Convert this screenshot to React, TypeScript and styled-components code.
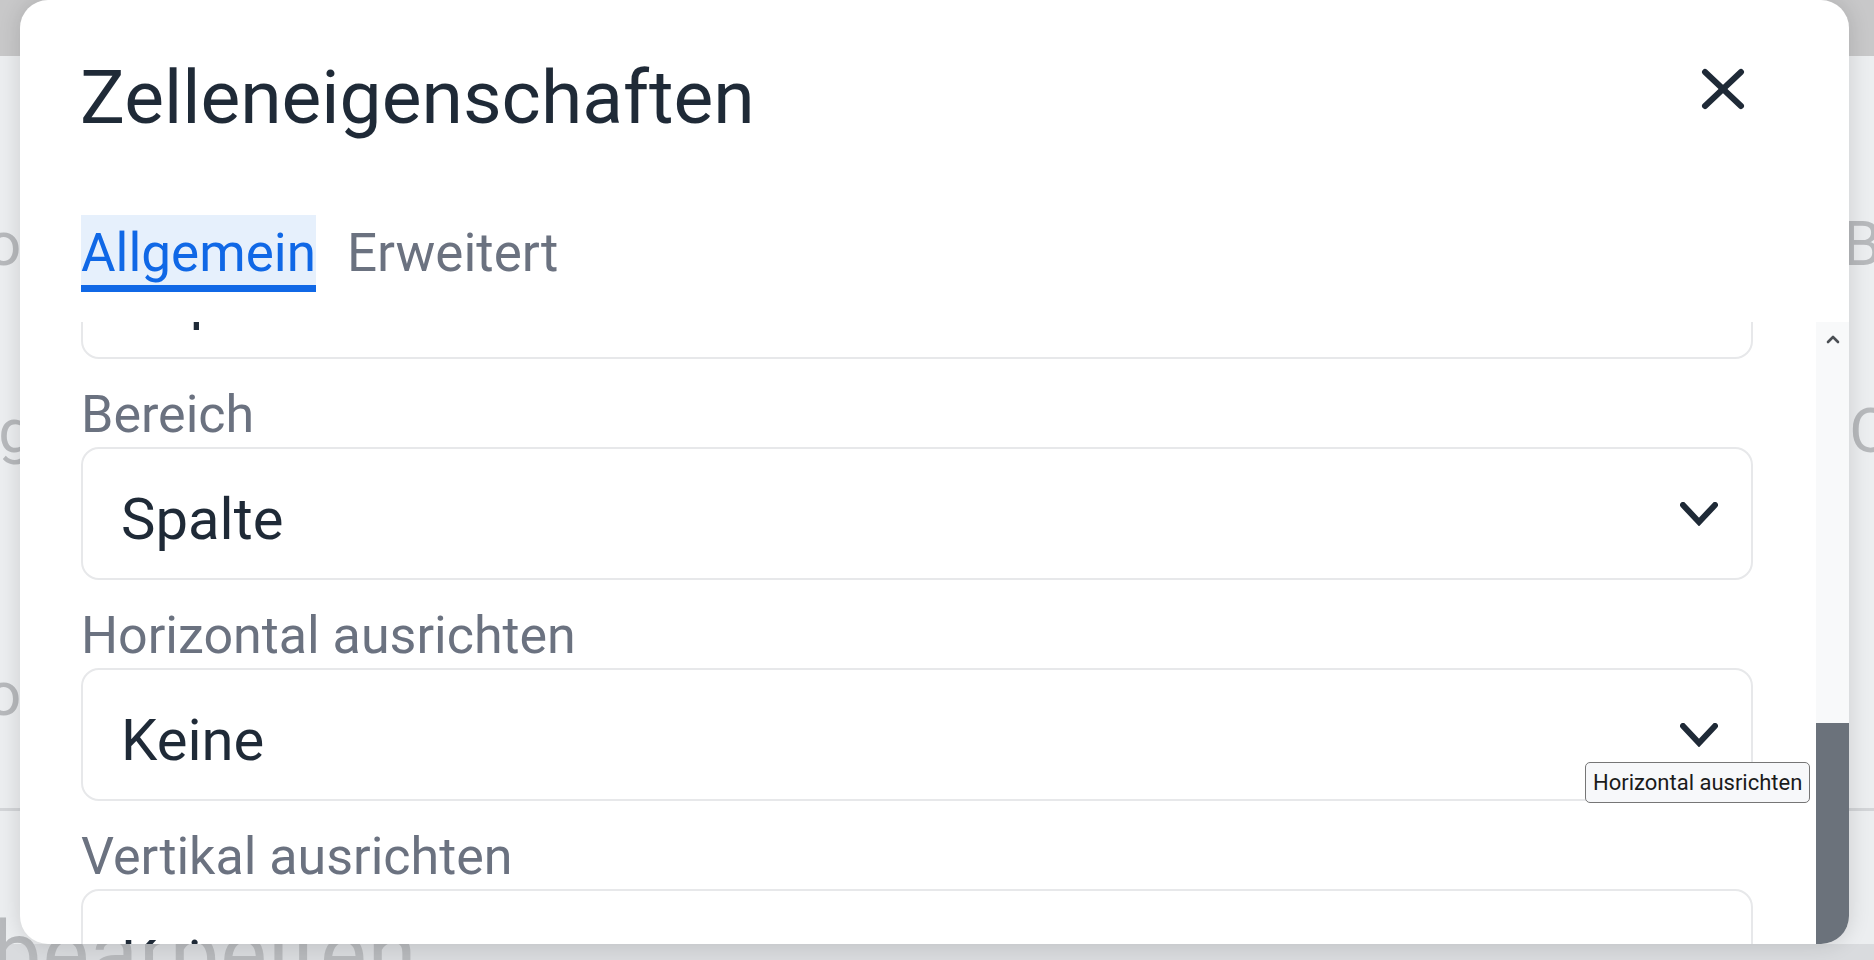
import React from "react";
import styled, { createGlobalStyle } from "styled-components";

const COLORS = {
    PAGE: "#eceef0",
    BAND: "#c8c8c9",
    GHOST: "#b7b9bc",
    TEXT: "#1f2a37",
    MUTED: "#6b7280",
    BLUE: "#1068e6",
    BLUE_BG: "#e6f0fc",
    BORDER: "#e7e8ea",
    TRACK: "#f8f9fa",
    THUMB: "#6b727b",
};

const GlobalStyle = createGlobalStyle`
    html, body {
        margin: 0;
        padding: 0;
    }
    body {
        font-family: Roboto, "Liberation Sans", sans-serif;
        background: ${COLORS.PAGE};
        overflow: hidden;
    }
    * {
        box-sizing: border-box;
    }
`;

const fields = [
    { label: "Zellentyp", value: "Kopfzelle" },
    { label: "Bereich", value: "Spalte" },
    { label: "Horizontal ausrichten", value: "Keine" },
    { label: "Vertikal ausrichten", value: "Keine" },
];

const Chevron = () => (
    <svg width="38" height="24" viewBox="0 0 38 24" fill="none">
        <polyline points="3,3 19,20 35,3" stroke={COLORS.TEXT} strokeWidth="6" strokeLinecap="round" strokeLinejoin="miter" />
    </svg>
);

const App: React.FC = () => {
    return (
        <>
            <GlobalStyle />
            <Page>
                <TopBand />
                <PageBody>
                    {/* faint page content peeking out beside the dialog */}
                    <GhostRow gap={158}>
                        <GhostText shiftLeft={-14}>o</GhostText>
                        <GhostText shiftRight={-43}>Bo</GhostText>
                    </GhostRow>
                    <GhostRow gap={127}>
                        <GhostText shiftLeft={-22}>tg</GhostText>
                        <GhostText shiftRight={-18}>O</GhostText>
                    </GhostRow>
                    <GhostRow gap={203}>
                        <GhostText shiftLeft={-14}>o</GhostText>
                        <GhostText shiftRight={-40}></GhostText>
                    </GhostRow>
                    <GhostLine />
                </PageBody>
                <Footer>
                    <FooterText>bearbeiten</FooterText>
                </Footer>

                <Modal>
                    <Header>
                        <Title>Zelleneigenschaften</Title>
                        <CloseButton aria-label="Schließen">
                            <svg width="44" height="42" viewBox="0 0 44 42" fill="none">
                                <line x1="4" y1="4" x2="40" y2="38" stroke={COLORS.TEXT} strokeWidth="6" strokeLinecap="round" />
                                <line x1="40" y1="4" x2="4" y2="38" stroke={COLORS.TEXT} strokeWidth="6" strokeLinecap="round" />
                            </svg>
                        </CloseButton>
                    </Header>

                    <TabList>
                        <Tab active>Allgemein</Tab>
                        <Tab>Erweitert</Tab>
                    </TabList>

                    <ScrollArea>
                        <ScrollContent>
                            <FieldList>
                                {fields.map(f => (
                                    <FieldGroup key={f.label}>
                                        <FieldLabel>{f.label}</FieldLabel>
                                        <SelectBox>
                                            <SelectValue>{f.value}</SelectValue>
                                            <Chevron />
                                        </SelectBox>
                                    </FieldGroup>
                                ))}
                            </FieldList>
                        </ScrollContent>
                        <Scrollbar>
                            <ScrollButton>
                                <svg width="14" height="9" viewBox="0 0 14 9" fill="none">
                                    <polyline points="2,7 7,2 12,7" stroke="#4b4f54" strokeWidth="2.6" strokeLinecap="round" strokeLinejoin="round" />
                                </svg>
                            </ScrollButton>
                            <ScrollTrack />
                            <ScrollThumb />
                        </Scrollbar>
                    </ScrollArea>
                </Modal>

                <Tooltip>Horizontal ausrichten</Tooltip>
            </Page>
        </>
    );
};

const Page = styled.div`
    position: relative;
    width: 1874px;
    height: 960px;
    overflow: hidden;
    display: flex;
    flex-direction: column;
    background: ${COLORS.PAGE};
`;

const TopBand = styled.div`
    height: 56px;
    background: ${COLORS.BAND};
`;

const PageBody = styled.div`
    flex: 1;
    display: flex;
    flex-direction: column;
`;

const GhostRow = styled.div<{ gap: number }>`
    display: flex;
    justify-content: space-between;
    align-items: center;
    height: 60px;
    margin-top: ${p => p.gap}px;
`;

const GhostText = styled.span<{ shiftLeft?: number; shiftRight?: number }>`
    font-size: 62px;
    line-height: 1;
    color: ${COLORS.GHOST};
    margin-left: ${p => p.shiftLeft ?? 0}px;
    margin-right: ${p => p.shiftRight ?? 0}px;
`;

const GhostLine = styled.div`
    height: 3px;
    margin-top: 84px;
    background: #d3d5d8;
`;

const Footer = styled.div`
    height: 51px;
    overflow: hidden;
    background: linear-gradient(to bottom, ${COLORS.PAGE} 0 35px, #d9dbde 35px);
`;

const FooterText = styled.div`
    font-size: 88px;
    line-height: 1;
    color: ${COLORS.GHOST};
    margin-left: -8px;
    letter-spacing: 1px;
`;

const Modal = styled.div`
    position: absolute;
    left: 20px;
    top: 0;
    width: 1829px;
    height: 944px;
    display: flex;
    flex-direction: column;
    background: #ffffff;
    border-radius: 28px;
    overflow: hidden;
    box-shadow: 0 0 22px rgba(0, 0, 0, 0.14);
`;

const Header = styled.div`
    display: flex;
    justify-content: space-between;
    align-items: flex-start;
    padding: 59px 104px 0 60px;
`;

const Title = styled.h1`
    margin: 0;
    font-size: 75px;
    line-height: 76px;
    font-weight: 400;
    color: ${COLORS.TEXT};
`;

const CloseButton = styled.button`
    margin-top: 9px;
    padding: 0;
    border: none;
    background: none;
    display: flex;
    cursor: pointer;
`;

const TabList = styled.div`
    display: flex;
    gap: 31px;
    margin-top: 80px;
    padding-left: 61px;
`;

const Tab = styled.button<{ active?: boolean }>`
    font-family: inherit;
    font-size: 53px;
    line-height: 1;
    padding: 12px 0 5px;
    border: none;
    border-bottom: 7px solid ${p => (p.active ? COLORS.BLUE : "transparent")};
    background: ${p => (p.active ? COLORS.BLUE_BG : "transparent")};
    color: ${p => (p.active ? COLORS.BLUE : COLORS.MUTED)};
    cursor: pointer;
`;

const ScrollArea = styled.div`
    flex: 1;
    min-height: 0;
    display: flex;
    margin-top: 30px;
`;

const ScrollContent = styled.div`
    flex: 1;
    overflow: hidden;
    padding: 0 63px 0 61px;
`;

const FieldList = styled.div`
    display: flex;
    flex-direction: column;
    gap: 23px;
    margin-top: -161px;
`;

const FieldGroup = styled.div`
    display: flex;
    flex-direction: column;
`;

const FieldLabel = styled.label`
    font-size: 52px;
    line-height: 65px;
    color: ${COLORS.MUTED};
`;

const SelectBox = styled.div`
    height: 133px;
    display: flex;
    align-items: center;
    justify-content: space-between;
    padding: 0 33px 0 38px;
    border: 2px solid ${COLORS.BORDER};
    border-radius: 18px;
    background: #ffffff;
`;

const SelectValue = styled.span`
    font-size: 58px;
    line-height: 1;
    padding-top: 10px;
    color: ${COLORS.TEXT};
`;

const Scrollbar = styled.div`
    width: 33px;
    display: flex;
    flex-direction: column;
    background: ${COLORS.TRACK};
`;

const ScrollButton = styled.div`
    height: 34px;
    display: flex;
    align-items: center;
    justify-content: center;
`;

const ScrollTrack = styled.div`
    flex: 1;
`;

const ScrollThumb = styled.div`
    height: 221px;
    background: ${COLORS.THUMB};
`;

const Tooltip = styled.div`
    position: absolute;
    left: 1585px;
    top: 762px;
    height: 41px;
    padding: 0 7px;
    display: flex;
    align-items: center;
    font-size: 22px;
    color: #1b1b1b;
    background: #f7f8fa;
    border: 1px solid #767676;
    border-radius: 5px;
    white-space: nowrap;
`;

export default App;
